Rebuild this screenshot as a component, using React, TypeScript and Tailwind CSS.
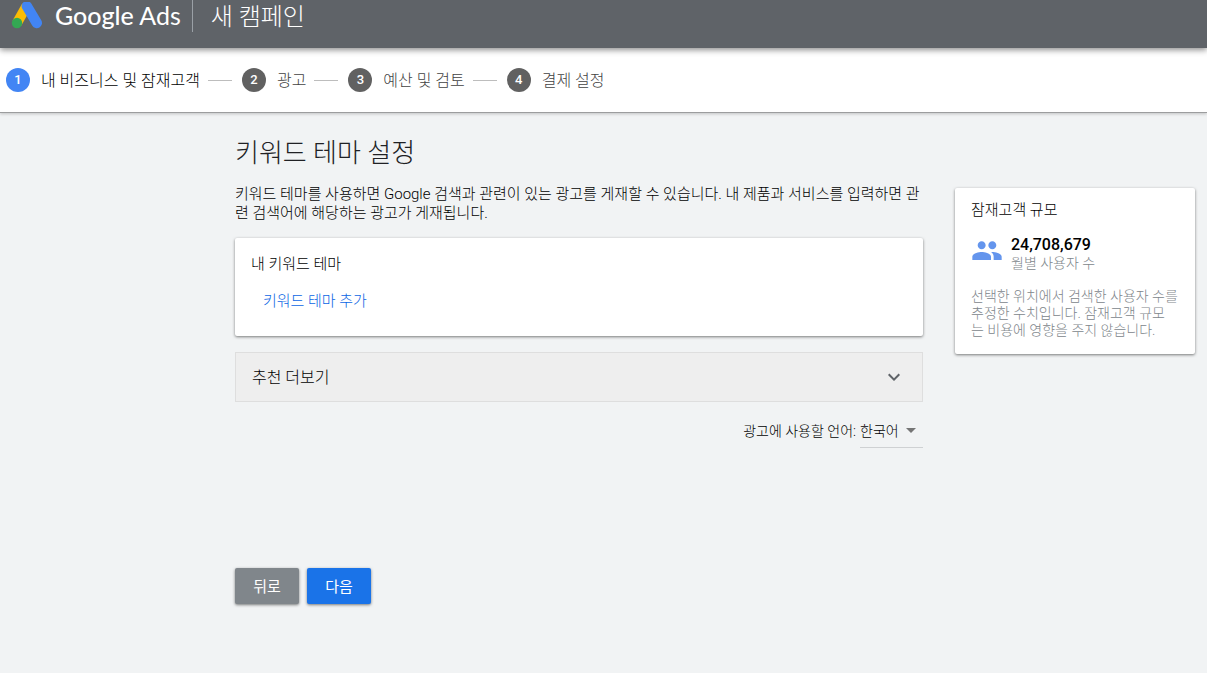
import React, { useState } from 'react';

const steps = ['내 비즈니스 및 잠재고객', '광고', '예산 및 검토', '결제 설정'];

const AdsLogo: React.FC = () => (
  <svg width="32" height="28" viewBox="0 0 32 28" fill="none" aria-hidden="true">
    <path d="M15.5 4L6 21" stroke="#fbbc04" strokeWidth="10" />
    <path d="M15.8 4.2L25.8 21" stroke="#4285f4" strokeWidth="10.4" strokeLinecap="round" />
    <circle cx="6" cy="21" r="5.2" fill="#34a853" />
  </svg>
);

const PeopleIcon: React.FC = () => (
  <svg width="32" height="30" viewBox="0 1 24 22.5" fill="#6495ed" aria-hidden="true">
    <path d="M16 11c1.66 0 2.99-1.34 2.99-3S17.66 5 16 5s-3 1.34-3 3 1.34 3 3 3zm-8 0c1.66 0 2.99-1.34 2.99-3S9.66 5 8 5 5 6.34 5 8s1.34 3 3 3zm0 2c-2.33 0-7 1.17-7 3.5V19h14v-2.5c0-2.33-4.67-3.5-7-3.5zm8 0c-.29 0-.62.02-.97.05 1.16.84 1.97 1.97 1.97 3.45V19h6v-2.5c0-2.33-4.67-3.5-7-3.5z" />
  </svg>
);

const App: React.FC = () => {
  const [language, setLanguage] = useState('ko');

  return (
    <div className="min-h-screen bg-[#f1f3f4] font-['Roboto','Noto_Sans_CJK_KR',sans-serif] font-light text-black">
      {/* Top bar */}
      <header className="relative z-10 flex h-12 items-center bg-[#5f6368] pb-4 pl-[11px] text-white shadow-[0_2px_6px_rgba(0,0,0,0.45)]">
        <AdsLogo />
        <div className="ml-3 font-['Lato',sans-serif] text-[25px] font-normal">
          <span className="font-medium">Google</span> Ads
        </div>
        <div className="ml-[11px] h-8 w-px bg-[#9aa0a6]" />
        <h1 className="ml-[18px] pt-0.5 text-2xl font-light">새 캠페인</h1>
      </header>

      {/* Steps */}
      <nav className="border-b border-[#9c9d9e] bg-white shadow-[0_1px_3px_rgba(0,0,0,0.2)]">
        <ol className="flex h-16 items-center pl-1.5">
          {steps.map((step, idx) => (
            <li key={step} className="flex items-center">
              {idx > 0 && <span className="mr-2.5 ml-2 h-px w-6 bg-[#bdbdbd]" />}
              <span
                className={`flex size-6 items-center justify-center rounded-full text-[13px] font-medium text-white ${
                  idx === 0 ? 'bg-[#4285f4]' : 'bg-[#616161]'
                }`}
              >
                {idx + 1}
              </span>
              <span className={`ml-[11px] pt-0.5 text-base ${idx === 0 ? 'text-black' : 'text-[#424242]'}`}>{step}</span>
            </li>
          ))}
        </ol>
      </nav>

      <div className="flex items-start gap-8 pr-3 pl-[235px]">
        {/* Keyword themes */}
        <main className="min-w-0 flex-1 pt-5">
          <h2 className="text-[26px] leading-10 font-light text-[#202124]">키워드 테마 설정</h2>
          <p className="mt-3 text-[15px] leading-[19px]">
            키워드 테마를 사용하면 Google 검색과 관련이 있는 광고를 게재할 수 있습니다. 내 제품과 서비스를 입력하면 관련 검색어에 해당하는 광고가 게재됩니다.
          </p>

          <section className="mt-[15px] rounded-xs bg-white px-4 pt-4 pb-4 shadow-[0_1px_3px_rgba(0,0,0,0.5)]">
            <h3 className="text-[15px] leading-5">내 키워드 테마</h3>
            <button type="button" className="mt-1.5 h-10 px-3 pt-0.5 text-[15px] text-[#0b66e4]">
              키워드 테마 추가
            </button>
          </section>

          <button
            type="button"
            className="mt-4 flex h-[50px] w-full items-center justify-between border border-[#dedede] bg-[#eeeeee] px-4 text-base text-black"
          >
            <span className="pt-0.5">추천 더보기</span>
            <svg width="24" height="24" viewBox="0 0 24 24" fill="#5f6368" aria-hidden="true">
              <path d="M16.59 8.59L12 13.17 7.41 8.59 6 10l6 6 6-6z" />
            </svg>
          </button>

          <div className="mt-[13px] flex justify-end gap-1 text-sm">
            <label htmlFor="ad-language" className="leading-8">광고에 사용할 언어:</label>
            <div className="flex border-b border-[#cfd1d3]">
              <select
                id="ad-language"
                value={language}
                onChange={(e) => setLanguage(e.target.value)}
                className="-mr-6 h-8 appearance-none bg-transparent pr-6"
              >
                <option value="ko">한국어</option>
              </select>
              <svg width="24" height="32" viewBox="0 0 24 32" fill="#757575" className="pointer-events-none" aria-hidden="true">
                <path d="M7 13l5 5 5-5z" />
              </svg>
            </div>
          </div>

          <div className="mt-[120px] flex gap-2 pb-16 text-[15px] text-white">
            <button type="button" className="h-9 w-16 rounded-xs bg-[#80868b] pt-0.5 font-normal shadow-[0_1px_3px_rgba(0,0,0,0.5)]">
              뒤로
            </button>
            <button type="button" className="h-9 w-16 rounded-xs bg-[#1a73e8] pt-0.5 font-normal shadow-[0_1px_3px_rgba(0,0,0,0.5)]">
              다음
            </button>
          </div>
        </main>

        {/* Audience size */}
        <aside className="mt-[75px] w-60 shrink-0 rounded-xs bg-white px-4 pt-3 pb-[15px] shadow-[0_1px_3px_rgba(0,0,0,0.5)]">
          <h3 className="text-[15px] leading-5">잠재고객 규모</h3>
          <div className="mt-4 flex items-start gap-2">
            <PeopleIcon />
            <div>
              <div className="text-base leading-[18px] font-medium">24,708,679</div>
              <div className="text-sm leading-[18px] text-[#80868b]">월별 사용자 수</div>
            </div>
          </div>
          <p className="mt-4 text-sm leading-[17px] text-[#80868b]">
            선택한 위치에서 검색한 사용자 수를 추정한 수치입니다. 잠재고객 규모
            <br />
            는 비용에 영향을 주지 않습니다.
          </p>
        </aside>
      </div>
    </div>
  );
};

export default App;
